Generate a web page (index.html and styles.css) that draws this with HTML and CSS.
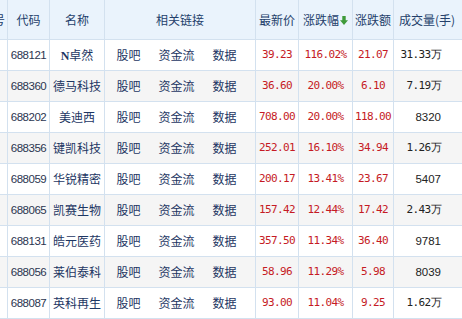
FILE: index.html
```html
<!DOCTYPE html>
<html lang="zh">
<head>
<meta charset="utf-8">
<link rel="stylesheet" href="styles.css">
</head>
<body>
<div class="wrap">
<table class="grid">
  <colgroup>
    <col class="c-seq"><col class="c-code"><col class="c-name"><col class="c-link"><col class="c-price"><col class="c-pct"><col class="c-chg"><col class="c-vol">
  </colgroup>
  <thead>
    <tr>
      <th class="seq"><span class="seq-text">序号</span></th><th>代码</th><th>名称</th><th>相关链接</th><th>最新价</th>
      <th><span class="sorted">涨跌幅<svg class="arrow" width="8" height="9" viewBox="0 0 8 9"><path d="M2.3 0H5.7V4.2H8L4 9L0 4.2H2.3Z" fill="#3e9a3a"/></svg></span></th>
      <th>涨跌额</th><th class="h-vol">成交量(手)</th>
    </tr>
  </thead>
  <tbody>
    <tr><td></td><td class="code">688121</td><td class="name"><span class="n">N</span>卓然</td><td class="links"><a>股吧</a><a>资金流</a><a>数据</a></td><td class="num up">39.23</td><td class="num up">116.02%</td><td class="num up">21.07</td><td class="num vol">31.33万</td></tr>
    <tr><td></td><td class="code">688360</td><td class="name">德马科技</td><td class="links"><a>股吧</a><a>资金流</a><a>数据</a></td><td class="num up">36.60</td><td class="num up">20.00%</td><td class="num up">6.10</td><td class="num vol">7.19万</td></tr>
    <tr><td></td><td class="code">688202</td><td class="name">美迪西</td><td class="links"><a>股吧</a><a>资金流</a><a>数据</a></td><td class="num up">708.00</td><td class="num up">20.00%</td><td class="num up">118.00</td><td class="int">8320</td></tr>
    <tr><td></td><td class="code">688356</td><td class="name">键凯科技</td><td class="links"><a>股吧</a><a>资金流</a><a>数据</a></td><td class="num up">252.01</td><td class="num up">16.10%</td><td class="num up">34.94</td><td class="num vol">1.26万</td></tr>
    <tr><td></td><td class="code">688059</td><td class="name">华锐精密</td><td class="links"><a>股吧</a><a>资金流</a><a>数据</a></td><td class="num up">200.17</td><td class="num up">13.41%</td><td class="num up">23.67</td><td class="int">5407</td></tr>
    <tr><td></td><td class="code">688065</td><td class="name">凯赛生物</td><td class="links"><a>股吧</a><a>资金流</a><a>数据</a></td><td class="num up">157.42</td><td class="num up">12.44%</td><td class="num up">17.42</td><td class="num vol">2.43万</td></tr>
    <tr><td></td><td class="code">688131</td><td class="name">皓元医药</td><td class="links"><a>股吧</a><a>资金流</a><a>数据</a></td><td class="num up">357.50</td><td class="num up">11.34%</td><td class="num up">36.40</td><td class="int">9781</td></tr>
    <tr><td></td><td class="code">688056</td><td class="name">莱伯泰科</td><td class="links"><a>股吧</a><a>资金流</a><a>数据</a></td><td class="num up">58.96</td><td class="num up">11.29%</td><td class="num up">5.98</td><td class="int">8039</td></tr>
    <tr><td></td><td class="code">688087</td><td class="name">英科再生</td><td class="links"><a>股吧</a><a>资金流</a><a>数据</a></td><td class="num up">93.00</td><td class="num up">11.04%</td><td class="num up">9.25</td><td class="num vol">1.62万</td></tr>
  </tbody>
</table>
</div>
</body>
</html>
```
FILE: styles.css
```css
html, body {
  margin: 0;
  padding: 0;
  background: #ffffff;
}
.wrap {
  width: 462px;
  height: 319px;
  overflow: hidden;
}
.grid {
  margin-left: -24px;
  table-layout: fixed;
  border-collapse: separate;
  border-spacing: 0;
  width: 498px;
  font-family: "Noto Sans CJK SC", "Liberation Sans", sans-serif;
  font-size: 12px;
  color: #1d3663;
}
.c-seq { width: 32px; }
.c-code { width: 42px; }
.c-name { width: 55px; }
.c-link { width: 151px; }
.c-price { width: 43px; }
.c-pct { width: 54px; }
.c-chg { width: 41px; }
.c-vol { width: 80px; }

.grid th, .grid td {
  box-sizing: border-box;
  padding: 0;
  border-right: 1px solid #d3e1ef;
  border-bottom: 1px solid #d3e1ef;
  text-align: center;
  white-space: nowrap;
  overflow: hidden;
  line-height: 16px;
}
.grid th {
  height: 40px;
  background: #eaf3fc;
  font-weight: normal;
  color: #243f6b;
}
.grid th.seq {
  text-align: right;
  padding-right: 2px;
}
.grid th.h-vol {
  padding-right: 13px;
}
.grid td {
  height: 31px;
}
.grid tbody tr:nth-child(even) td {
  background: #f5f5f5;
}
.sorted {
  display: inline-flex;
  align-items: center;
  gap: 1px;
}
.arrow {
  display: block;
  margin-top: 1px;
}
.code {
  font-family: "Liberation Sans", sans-serif;
  font-size: 11.5px;
  letter-spacing: -0.5px;
  color: #2b3550;
}
.name {
  font-size: 12px;
  color: #1d3663;
}
.n {
  font-family: "Liberation Serif", serif;
  font-weight: bold;
}
.grid td.links {
  padding-right: 7px;
}
.links a {
  display: inline-block;
  margin: 0 9px;
  color: #1d3663;
}
.num {
  font-family: "DejaVu Sans Mono", monospace;
  font-size: 11px;
  letter-spacing: -0.6px;
}
.up {
  color: #c51a24;
}
.grid td.vol, .grid td.int {
  text-align: right;
  padding-right: 32px;
  color: #222222;
}
.int {
  font-family: "Liberation Sans", sans-serif;
  font-size: 11.5px;
}
```
